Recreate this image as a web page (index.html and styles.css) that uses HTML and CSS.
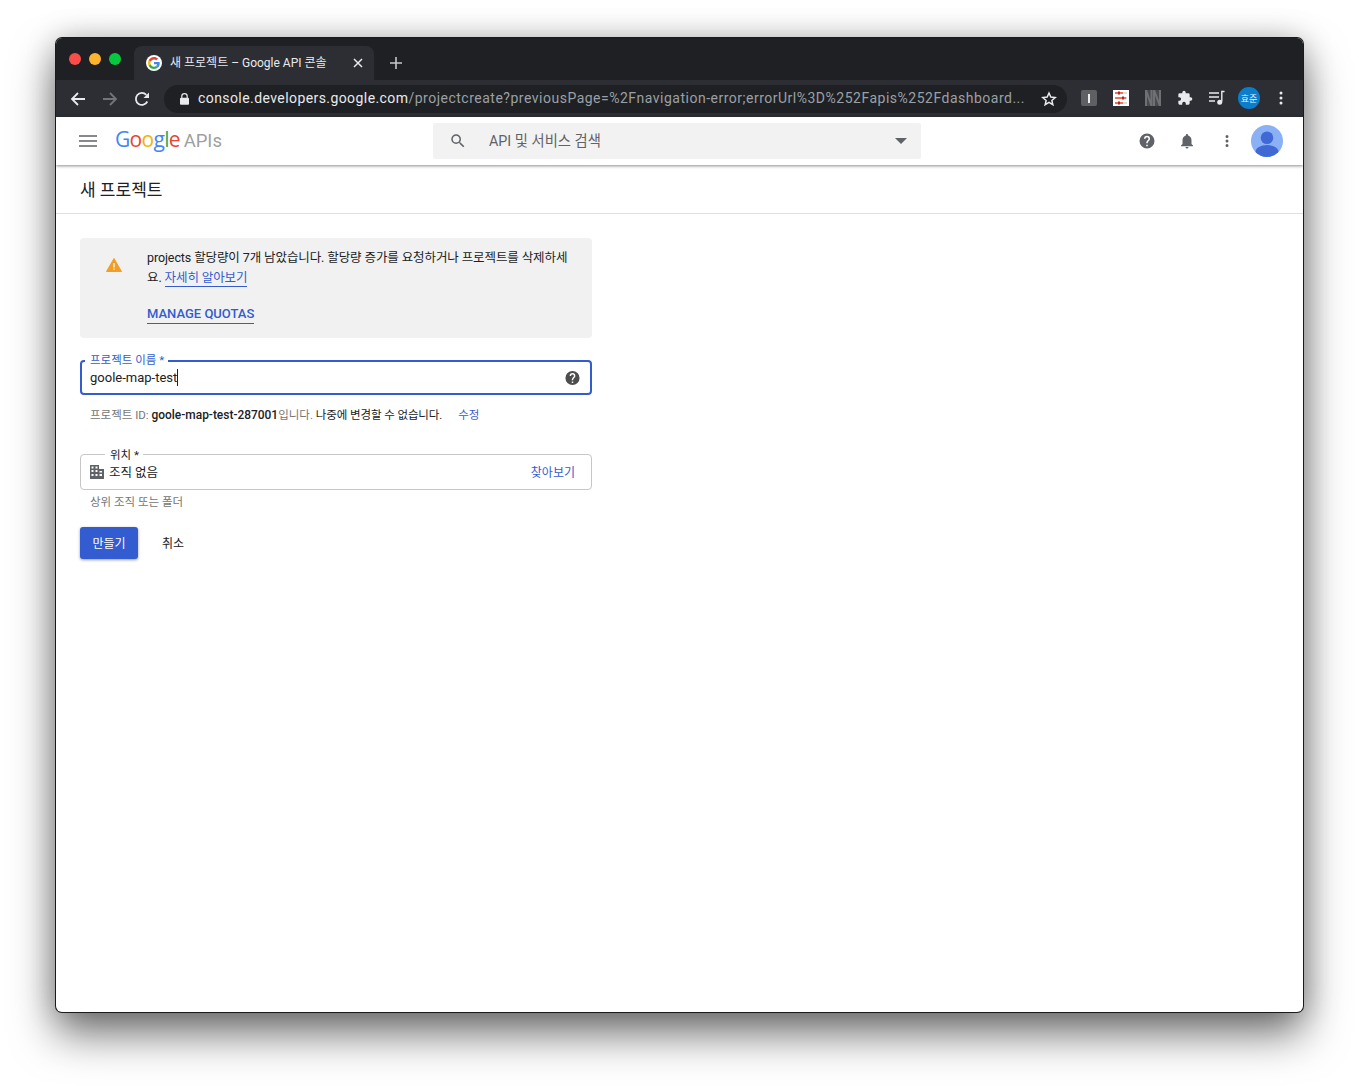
FILE: index.html
```html
<!DOCTYPE html>
<html lang="ko">
<head>
<meta charset="utf-8">
<title>새 프로젝트 – Google API 콘솔</title>
<link rel="stylesheet" href="styles.css">
</head>
<body>
<div class="window">
  <div class="tabstrip">
    <div class="lights"><i class="light red"></i><i class="light yellow"></i><i class="light green"></i></div>
    <div class="tab">
      <span class="favicon"><svg width="16" height="16" viewBox="0 0 48 48"><circle cx="24" cy="24" r="24" fill="#fff"/><g transform="translate(6 6) scale(.75)"><path fill="#EA4335" d="M24 9.500c3.500 0 6.700 1.200 9.200 3.600l6.900-6.900C35.900 2.400 30.500 0 24 0 14.600 0 6.500 5.400 2.600 13.200l8 6.200C12.400 13.700 17.700 9.500 24 9.500z"/><path fill="#4285F4" d="M46.900 24.500c0-1.600-.1-3.100-.4-4.500H24v9h12.900c-.6 3-2.200 5.500-4.700 7.200l7.700 6c4.500-4.200 7-10.300 7-17.700z"/><path fill="#FBBC05" d="M10.500 28.600c-.5-1.400-.8-3-.8-4.600s.3-3.200.8-4.600l-8-6.200C.9 16.500 0 20.100 0 24s.9 7.500 2.600 10.800l7.900-6.200z"/><path fill="#34A853" d="M24 48c6.500 0 11.900-2.100 15.900-5.800l-7.700-6c-2.100 1.400-4.900 2.300-8.200 2.300-6.300 0-11.600-4.200-13.500-9.900l-8 6.200C6.500 42.600 14.600 48 24 48z"/></g></svg></span>
      <span class="tab-title">새 프로젝트 – Google API 콘솔</span>
      <svg class="tab-close" width="10" height="10" viewBox="0 0 10 10"><path d="M1 1l8 8M9 1l-8 8" stroke="#e8eaed" stroke-width="1.500"/></svg>
    </div>
    <svg class="newtab" width="12" height="12" viewBox="0 0 12 12"><path d="M6 0v12M0 6h12" stroke="#c4c7cc" stroke-width="1.600"/></svg>
  </div>
  <div class="toolbar">
    <svg class="nav-icon first" width="16" height="16" viewBox="0 0 16 16"><path d="M15 8H2M8 2L2 8l6 6" fill="none" stroke="#e8eaed" stroke-width="1.800"/></svg>
    <svg class="nav-icon" width="16" height="16" viewBox="0 0 16 16"><path d="M1 8h13M8 2l6 6-6 6" fill="none" stroke="#727478" stroke-width="1.800"/></svg>
    <svg class="nav-icon" width="16" height="16" viewBox="0 0 16 16"><path d="M13.300 10.500A6 6 0 1 1 12.300 3.800" fill="none" stroke="#e8eaed" stroke-width="1.800"/><path d="M15 1.500V7H9.500z" fill="#e8eaed"/></svg>
    <div class="omnibox">
      <svg class="lock" width="9" height="12" viewBox="0 0 9 12"><path d="M1.800 5V3.300a2.700 2.700 0 0 1 5.400 0V5" fill="none" stroke="#e8eaed" stroke-width="1.200"/><rect y="4.800" width="9" height="7" rx="1" fill="#e8eaed"/></svg>
      <span class="url"><span class="url-host">console.developers.google.com</span>/projectcreate?previousPage=%2Fnavigation-error;errorUrl%3D%252Fapis%252Fdashboard...</span>
      <svg class="star" width="16" height="16" viewBox="0 0 24 24"><path d="M12 3l2.700 6.100 6.600.6-5 4.400 1.500 6.500L12 17.200l-5.800 3.400 1.500-6.500-5-4.400 6.600-.6z" fill="none" stroke="#e8eaed" stroke-width="2.200"/></svg>
    </div>
    <div class="extensions">
      <span class="ext ext-i"><i></i></span>
      <svg class="ext" width="16" height="16" viewBox="0 0 16 16"><rect width="16" height="16" fill="#fff"/><path d="M2 3h8M2 8h11M2 13h8" stroke="#e8452c" stroke-width="1.300"/><path d="M10 3h4M13 8h1M10 13h4" stroke="#bbb" stroke-width="1"/><rect x="5" y="1.500" width="2" height="3" fill="#b5281a"/><rect x="9" y="6.500" width="2" height="3" fill="#b5281a"/><rect x="5" y="11.500" width="2" height="3" fill="#b5281a"/></svg>
      <svg class="ext" width="16" height="16" viewBox="0 0 16 16"><rect width="16" height="16" fill="#48494d"/><path d="M1 16V0l5.500 16V0M9 16V0l6 16V0" fill="none" stroke="#6f7073" stroke-width="2"/></svg>
      <svg class="ext" width="16" height="16" viewBox="0 0 24 24"><path d="M20.500 11H19V7a2 2 0 0 0-2-2h-4V3.500a2.500 2.500 0 0 0-5 0V5H4a2 2 0 0 0-2 2v3.800h1.500a2.700 2.700 0 0 1 0 5.400H2V20a2 2 0 0 0 2 2h3.800v-1.500a2.700 2.700 0 0 1 5.400 0V22H17a2 2 0 0 0 2-2v-4h1.500a2.500 2.500 0 0 0 0-5z" fill="#e8eaed"/></svg>
      <svg class="ext" width="16" height="16" viewBox="0 0 16 16"><path d="M0 3h10M0 7h10M0 11h6" stroke="#e8eaed" stroke-width="1.300"/><path d="M15.500 1.500h-2.700v10" fill="none" stroke="#e8eaed" stroke-width="1.400"/><circle cx="10.700" cy="12.300" r="2.500" fill="#e8eaed"/></svg>
      <span class="profile">효준</span>
      <svg class="ext" width="4" height="14" viewBox="0 0 4 14"><circle cx="2" cy="2" r="1.500" fill="#e8eaed"/><circle cx="2" cy="7" r="1.500" fill="#e8eaed"/><circle cx="2" cy="12" r="1.500" fill="#e8eaed"/></svg>
    </div>
  </div>
  <header class="appbar">
    <svg class="menu" width="18" height="12" viewBox="0 0 18 12"><path d="M0 1h18M0 6h18M0 11h18" stroke="#5f6368" stroke-width="1.700"/></svg>
    <div class="logo"><span class="g-blue">G</span><span class="g-red">o</span><span class="g-yellow">o</span><span class="g-blue">g</span><span class="g-green">l</span><span class="g-red">e</span> <span class="logo-apis">APIs</span></div>
    <div class="search">
      <svg width="18" height="18" viewBox="0 0 24 24"><path d="M15.500 14h-.79l-.28-.27A6.470 6.470 0 0 0 16 9.500 6.500 6.500 0 1 0 9.500 16c1.610 0 3.090-.59 4.230-1.570l.27.28v.79l5 4.990L20.490 19l-4.990-5zm-6 0C7.010 14 5 11.990 5 9.500S7.010 5 9.500 5 14 7.010 14 9.500 11.990 14 9.500 14z" fill="#5f6368"/></svg>
      <span class="search-text">API 및 서비스 검색</span>
      <i class="caret"></i>
    </div>
    <div class="app-actions">
      <svg width="18" height="18" viewBox="0 0 24 24"><path d="M12 2a10 10 0 1 0 0 20 10 10 0 0 0 0-20zm1 17h-2v-2h2zm2.100-7.700l-.9.900c-.7.700-1.200 1.300-1.200 2.800h-2v-.5c0-1.100.5-2.100 1.200-2.800l1.200-1.300c.4-.3.600-.8.600-1.400a2 2 0 0 0-4 0H8a4 4 0 0 1 8 0c0 .9-.4 1.700-.9 2.300z" fill="#5f6368"/></svg>
      <svg width="18" height="18" viewBox="0 0 24 24"><path d="M12 22a2 2 0 0 0 2-2h-4a2 2 0 0 0 2 2zm6-6v-5c0-3.100-1.600-5.600-4.500-6.300V4a1.500 1.500 0 0 0-3 0v.7C7.600 5.400 6 7.900 6 11v5l-2 2v1h16v-1z" fill="#5f6368"/></svg>
      <svg width="18" height="18" viewBox="0 0 24 24"><path d="M12 8a2 2 0 1 0 0-4 2 2 0 0 0 0 4zm0 2a2 2 0 1 0 0 4 2 2 0 0 0 0-4zm0 6a2 2 0 1 0 0 4 2 2 0 0 0 0-4z" fill="#5f6368"/></svg>
      <svg class="avatar" width="32" height="32" viewBox="0 0 32 32"><clipPath id="av"><circle cx="16" cy="16" r="16"/></clipPath><g clip-path="url(#av)"><rect width="32" height="32" fill="#8ab0f5"/><circle cx="16" cy="12.700" r="6.300" fill="#4169d6"/><ellipse cx="16" cy="27" rx="11.500" ry="7" fill="#4169d6"/></g></svg>
    </div>
  </header>
  <div class="subheader"><h1>새 프로젝트</h1></div>
  <main class="content">
    <section class="notice">
      <svg class="warn" width="16" height="16" viewBox="0 0 16 16"><path d="M8 1.500L15.500 14.500H.5z" fill="#f29d26" stroke="#f29d26" stroke-linejoin="round"/><path d="M8 6v4.500M8 11.500v1.300" stroke="#fff" stroke-width="1.300"/></svg>
      <div class="notice-body">
        <p class="notice-text">projects 할당량이 7개 남았습니다. 할당량 증가를 요청하거나 프로젝트를 삭제하세요. <a class="link">자세히 알아보기</a></p>
        <a class="link manage">MANAGE QUOTAS</a>
      </div>
    </section>
    <div class="field field-active">
      <span class="legend legend-active">프로젝트 이름 *</span>
      <span class="input-value">goole-map-test<i class="cursor"></i></span>
      <svg class="field-help" width="18" height="18" viewBox="0 0 24 24"><path d="M12 2a10 10 0 1 0 0 20 10 10 0 0 0 0-20zm1 17h-2v-2h2zm2.100-7.700l-.9.900c-.7.700-1.200 1.300-1.200 2.800h-2v-.5c0-1.100.5-2.100 1.200-2.800l1.200-1.300c.4-.3.600-.8.600-1.400a2 2 0 0 0-4 0H8a4 4 0 0 1 8 0c0 .9-.4 1.700-.9 2.300z" fill="#5f6368"/></svg>
    </div>
    <p class="hint id-hint">프로젝트 ID: <b>goole-map-test-287001</b>입니다. <span class="dark">나중에 변경할 수 없습니다.</span><a class="edit">수정</a></p>
    <div class="field field-location">
      <span class="legend legend-location">위치 *</span>
      <svg class="building" width="14" height="14" viewBox="0 0 14 14"><path fill-rule="evenodd" d="M0 0h9v4h5v10H0zM1.500 1.500v2h2v-2zm4 0v2h2v-2zm-4 3.500v2h2V5zm4 0v2h2V5zm4 1v1.500H12V6zM1.500 9v2h2V9zm4 0v2h2V9zm4 0v2H12V9z" fill="#5f6368"/></svg>
      <span class="location-value">조직 없음</span>
      <a class="browse">찾아보기</a>
    </div>
    <p class="hint location-hint">상위 조직 또는 폴더</p>
    <div class="actions">
      <button class="btn-primary">만들기</button>
      <button class="btn-text">취소</button>
    </div>
  </main>
</div>
</body>
</html>
```
FILE: styles.css
```css
* { box-sizing: border-box; }
html, body { margin: 0; height: 1086px; overflow: hidden; background: #fff; }
body {
  padding: 38px 56px 0 56px;
  font-family: Roboto, "Noto Sans CJK KR", sans-serif;
  color: #202124;
}
.window {
  height: 974px;
  background: #fff;
  border-radius: 6px;
  overflow: hidden;
  box-shadow: 0 0 0 1px #1a1a1a, 0 22px 44px rgba(0,0,0,.55), 0 0 30px rgba(0,0,0,.22);
  display: flex;
  flex-direction: column;
}
.tabstrip { height: 42px; background: #1f2023; display: flex; align-items: flex-end; flex: none; }
.lights { display: flex; gap: 8px; padding: 0 0 15px 13px; width: 78px; flex: none; align-self: flex-end; }
.light { width: 12px; height: 12px; border-radius: 50%; display: block; }
.red { background: #fa4c49; }
.yellow { background: #fdb32d; }
.green { background: #06c940; }
.tab {
  width: 240px; height: 34px; background: #2d2e33;
  border-radius: 8px 8px 0 0;
  display: flex; align-items: center; padding: 0 11px 0 12px;
  color: #e8eaed; font-size: 12px;
}
.favicon { width: 16px; height: 16px; margin-right: 8px; display: flex; }
.tab-title { flex: 1; white-space: nowrap; padding-bottom: 3px; }
.newtab { margin: 0 0 11px 16px; }
.toolbar { height: 37px; background: #2d2e33; display: flex; align-items: center; flex: none; padding-right: 15px; }
.nav-icon { margin-right: 16px; flex: none; }
.nav-icon.first { margin-left: 14px; }
.omnibox {
  width: 903px; height: 28px; margin-left: -2px; border-radius: 14px; background: #1f2023;
  display: flex; align-items: center; padding: 0 10px 0 16px; flex: none;
}
.lock { flex: none; margin-right: 9px; }
.url { flex: 1; min-width: 0; white-space: nowrap; overflow: hidden; color: #9aa0a6; font-size: 14px; letter-spacing: .5px; padding-bottom: 2px; }
.url-host { color: #e8eaed; letter-spacing: .42px; }
.star { flex: none; margin-left: 8px; }
.extensions { display: flex; align-items: center; gap: 16px; margin-left: 14px; padding-bottom: 1px; flex: 1; }
.ext { flex: none; display: block; }
.ext-i { width: 16px; height: 16px; background: #5f6063; border-radius: 2px; display: flex; align-items: center; justify-content: center; }
.ext-i i { width: 1.500px; height: 9px; background: #eee; display: block; }
.profile {
  width: 22px; height: 22px; border-radius: 50%; background: #0a7dcd; color: #e8f4ff;
  font-size: 9px; display: flex; align-items: center; justify-content: center; flex: none; margin-left: -3px;
}
.profile + .ext { margin-left: 3px; }
.appbar {
  height: 48px; flex: none; background: #fff; display: flex; align-items: center;
  box-shadow: 0 1px 3px rgba(0,0,0,.45); position: relative; padding: 0 20px 0 23px;
}
.menu { flex: none; }
.logo { width: 317px; margin-left: 18px; padding-bottom: 4px; font-family: "Open Sans", Roboto, sans-serif; font-size: 21px; letter-spacing: -.7px; white-space: nowrap; }
.g-blue { color: #4285f4; }
.g-red { color: #ea4335; }
.g-yellow { color: #f4b400; }
.g-green { color: #34a853; }
.logo-apis { color: #9f9f9f; font-family: Roboto, sans-serif; font-size: 18.500px; letter-spacing: 0; margin-left: -1px; }
.search {
  width: 488px; height: 36px; margin-left: 1px; background: #f2f2f2; border-radius: 2px; display: flex; align-items: center;
  padding: 0 14px 0 16px; color: #5f6368; font-size: 14.300px;
}
.search-text { flex: 1; margin-left: 22px; padding-bottom: 3px; }
.caret { width: 0; height: 0; border-left: 6px solid transparent; border-right: 6px solid transparent; border-top: 6px solid #5f6368; display: block; }
.app-actions { margin-left: auto; display: flex; align-items: center; gap: 22px; }
.avatar { margin-left: -7px; }
.subheader { height: 49px; border-bottom: 1px solid #e0e0e0; padding: 0 24px 2px; display: flex; align-items: center; flex: none; }
h1 { margin: 0; font-weight: 400; font-size: 17px; color: #202124; }
.content { width: 536px; padding: 24px 0 0 24px; flex: 1; }
.notice {
  height: 100px; background: #f1f1f1; border-radius: 4px; display: flex; padding: 10px 20px 0 26px;
}
.warn { flex: none; margin: 9px 25px 0 0; }
.notice-body { flex: 1; min-width: 0; }
.notice-text { margin: 0; font-size: 12.500px; line-height: 20px; color: #202124; letter-spacing: -.1px; }
.link { color: #325cd0; border-bottom: 1px solid #325cd0; padding-bottom: 1px; }
.manage { display: inline-block; margin-top: 18px; font-size: 13px; font-weight: 500; line-height: 16px; }
.field { position: relative; height: 35px; border-radius: 4px; display: flex; align-items: center; padding: 0 10px; font-size: 13px; }
.field-active { margin-top: 22px; border: 2px solid #325cd0; padding: 0 8px; }
.legend { position: absolute; left: 5px; top: -9px; background: #fff; padding: 0 4px 0 5px; font-size: 11.500px; line-height: 16px; }
.legend-active { left: 3px; top: -10px; color: #325cd0; }
.input-value { color: #202124; flex: 1; display: flex; align-items: center; }
.cursor { width: 1px; height: 17px; background: #202124; display: block; }
.field-help { flex: none; margin-right: 1px; width: 17px; }
.field-help path { fill: #4d4d4d; }
.hint { margin: 0; font-size: 11.500px; line-height: 16px; color: #757575; padding-left: 10px; }
.id-hint { margin-top: 12px; }
.id-hint b { font-weight: 500; font-size: 11.950px; color: #202124; }
.dark { color: #202124; letter-spacing: -.1px; }
.edit { color: #325cd0; margin-left: 16px; }
.field-location { margin-top: 31px; height: 36px; border: 1px solid #c6c6c6; padding: 0 16px 0 9px; }
.legend-location { left: 24px; top: -8px; color: #202124; padding: 0 4px 0 5px; }
.building { flex: none; margin-right: 5px; }
.location-value { flex: 1; font-size: 12.500px; color: #202124; padding-bottom: 1px; }
.browse { color: #325cd0; font-size: 12px; padding-bottom: 1px; }
.location-hint { margin-top: 4px; }
.actions { display: flex; align-items: center; margin-top: 17px; }
.btn-primary {
  width: 58px; height: 32px; background: #325cd0; color: #fff; border: 0; border-radius: 3px;
  font: inherit; font-size: 12px; padding: 0 0 2px; box-shadow: 0 1px 3px rgba(0,0,0,.4);
}
.btn-text { background: none; border: 0; font: inherit; font-size: 12px; color: #202124; margin-left: 24px; padding: 0 0 2px; }
```
